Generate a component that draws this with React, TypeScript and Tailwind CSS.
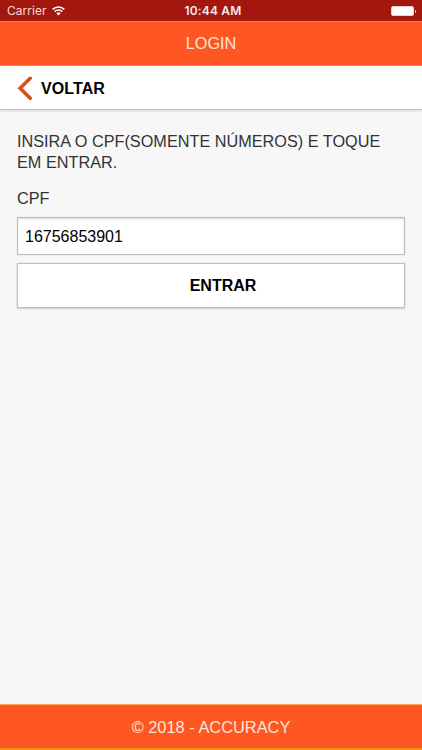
export default function App() {
  return (
    <div className="flex h-[750px] w-[422px] flex-col overflow-hidden bg-[#f7f7f7] font-['Liberation_Sans',Arial,sans-serif] text-[16px] leading-[21px] text-[#333]">
      <div className="grid h-[21px] shrink-0 grid-cols-3 items-center bg-[#a4170f] pt-px font-[Inter,sans-serif] text-[12px] leading-5 text-[#f8dcd8]">
        <div className="flex items-center gap-[5px] pl-[7px]">
          <span className="tracking-[0.05px]">Carrier</span>
          <svg width="13" height="10" viewBox="0 0 13 10" fill="none" stroke="#fff" strokeWidth="1.6">
            <path d="M.7 3.4a8.3 8.3 0 0 1 11.6 0" />
            <path d="M2.7 5.6a5.4 5.4 0 0 1 7.6 0" />
            <path d="M4.4 7.2a3 3 0 0 1 4.2 0L6.5 9.4Z" fill="#fff" stroke="none" />
          </svg>
        </div>
        <span className="pl-1 text-center font-semibold tracking-[0.15px] text-[#fbe9e7]">10:44 AM</span>
        <div className="flex items-center justify-end pr-1.5">
          <span className="h-[10px] w-[23px] rounded-[2px] border border-[#f3cdca] bg-white" />
          <span className="ml-px h-[3px] w-px rounded-r bg-[#f3cdca]" />
        </div>
      </div>
      <header className="flex h-[45px] shrink-0 items-center justify-center border-y border-[#f98620] bg-[#ff5722] text-[16.3px] text-[#ffe5d9]">
        LOGIN
      </header>
      <button className="flex h-[44px] shrink-0 items-center gap-[9px] border-b border-[#c4c4c4] bg-white pl-[17px] text-left font-bold text-black shadow-[0_1px_2px_rgba(0,0,0,0.15)]">
        <svg width="15" height="26" viewBox="0 0 15 26" fill="none" stroke="#d4521a" strokeWidth="3.6" strokeLinecap="round">
          <path d="M13.2 3.3 3.2 13.3l10 10" strokeLinejoin="miter" />
        </svg>
        <span className="pt-px tracking-[0.1px]">VOLTAR</span>
      </button>
      <main className="flex grow flex-col px-[17px] pt-[21px]">
        <p className="w-[372px] text-[16.25px]">INSIRA O CPF(SOMENTE NÚMEROS) E TOQUE EM ENTRAR.</p>
        <label htmlFor="cpf" className="mt-[15px] text-[16.25px]">CPF</label>
        <input
          id="cpf"
          defaultValue="16756853901"
          className="mt-[8px] h-[38px] w-[388px] rounded-[1px] border border-[#bdbdbd] bg-white px-[7px] pt-[2px] text-black shadow-[0_0_1px_rgba(0,0,0,0.3),inset_0_1px_2px_rgba(0,0,0,0.15)] outline-none"
        />
        <button className="mt-[8px] h-[45px] w-[388px] rounded-[1px] border border-[#c0c0c0] bg-white pl-6 font-bold text-black shadow-[0_0_1px_rgba(0,0,0,0.3),0_1px_2px_rgba(0,0,0,0.15)]">
          ENTRAR
        </button>
      </main>
      <footer className="flex h-[46px] shrink-0 items-center justify-center border-t border-b-2 border-t-[#fda64a] border-b-[#fb8c10] bg-[#ff5722] pt-[2px] text-[16.4px] text-[#ffe5d9]">
        © 2018 - ACCURACY
      </footer>
    </div>
  );
}
